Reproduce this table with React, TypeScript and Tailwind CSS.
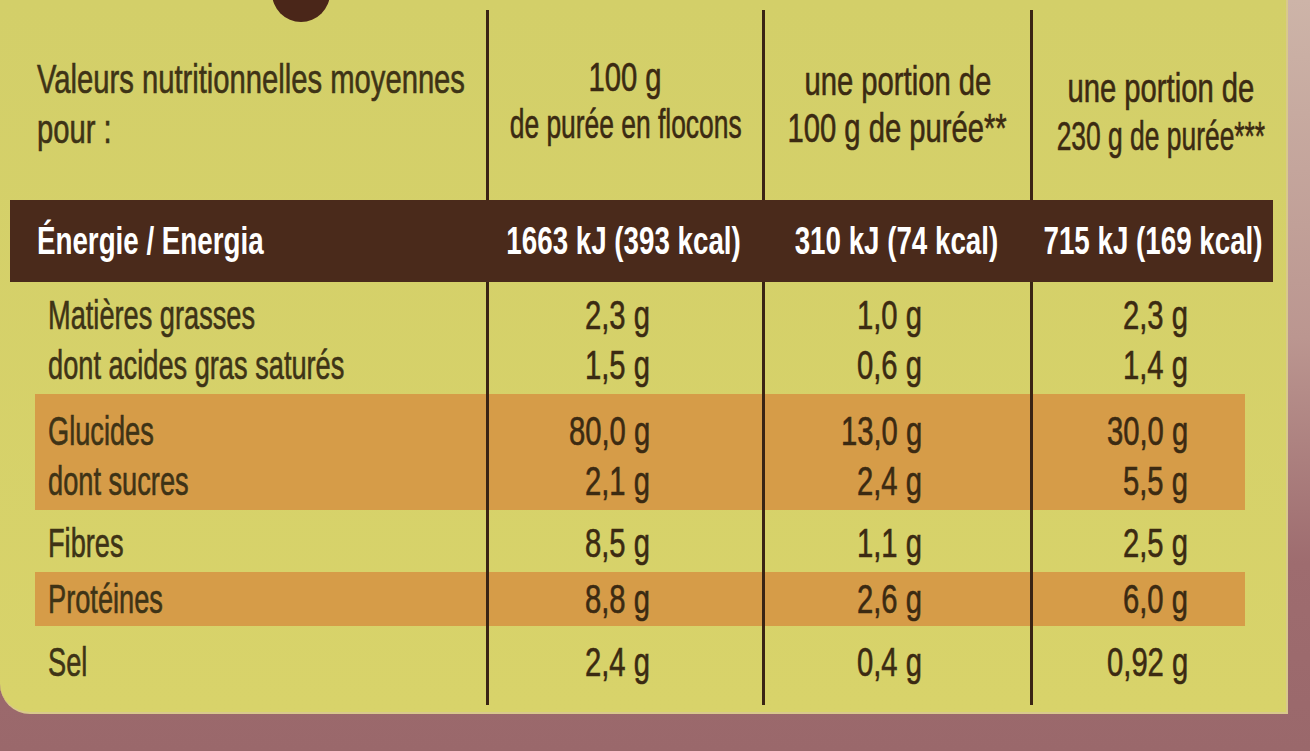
const font = "font-['Liberation_Sans','Arimo',sans-serif]"

const line = 'border-l-[3px] border-[#3a2414]'
const cols = 'grid grid-cols-[486px_276px_268px_258px]'
const band =
  'bg-[linear-gradient(to_right,transparent_35px,#d69c48_35px,#d69c48_1245px,transparent_1245px)]'
const ink = '[-webkit-text-stroke:0.6px_currentColor]'

// the print uses a condensed face; squeeze Liberation Sans to match its width
function Left({ children, label }: { children: string; label?: boolean }) {
  return (
    <div className={`whitespace-nowrap origin-left ${label ? 'scale-x-[0.68]' : 'scale-x-[0.73]'}`}>
      {children}
    </div>
  )
}

function Center({ children, tight }: { children: string; tight?: boolean }) {
  return (
    <div className="flex justify-center">
      <span
        className={`shrink-0 whitespace-nowrap origin-center ${tight ? 'scale-x-[0.66]' : 'scale-x-[0.73]'}`}
      >
        {children}
      </span>
    </div>
  )
}

function Right({ children }: { children: string }) {
  return (
    <div className="flex justify-end">
      <span className="shrink-0 whitespace-nowrap scale-x-[0.73] origin-right">{children}</span>
    </div>
  )
}

type Row = {
  labels: string[]
  values: [string[], string[], string[]]
  banded?: boolean
  h: string
}

const rows: Row[] = [
  {
    labels: ['Matières grasses', 'dont acides gras saturés'],
    values: [['2,3 g', '1,5 g'], ['1,0 g', '0,6 g'], ['2,3 g', '1,4 g']],
    h: 'h-[112px] pt-[8px]',
  },
  {
    labels: ['Glucides', 'dont sucres'],
    values: [['80,0 g', '2,1 g'], ['13,0 g', '2,4 g'], ['30,0 g', '5,5 g']],
    banded: true,
    h: 'h-[116px] pt-[12px]',
  },
  {
    labels: ['Fibres'],
    values: [['8,5 g'], ['1,1 g'], ['2,5 g']],
    h: 'h-[62px] pt-[8px]',
  },
  {
    labels: ['Protéines'],
    values: [['8,8 g'], ['2,6 g'], ['6,0 g']],
    banded: true,
    h: 'h-[54px] pt-[2px]',
  },
  {
    labels: ['Sel'],
    values: [['2,4 g'], ['0,4 g'], ['0,92 g']],
    h: 'h-[79px] pt-[11px]',
  },
]

function DataRow({ row }: { row: Row }) {
  const pads = ['pr-[112px]', 'pr-[108px]', 'pr-[100px]']
  return (
    <div className={`${cols} ${row.banded ? band : ''}`}>
      <div className={`${row.h} pl-[48px] text-[#3e3316]`}>
        {row.labels.map((l) => (
          <Left key={l} label>
            {l}
          </Left>
        ))}
      </div>
      {row.values.map((col, c) => (
        <div key={c} className={`${line} ${row.h} ${pads[c]}`}>
          {col.map((v, i) => (
            <Right key={i}>{v}</Right>
          ))}
        </div>
      ))}
    </div>
  )
}

export default function App() {
  return (
    <div className="w-[1310px] h-[751px] overflow-hidden bg-[linear-gradient(to_bottom,#cdb4a8_0%,#bb9690_45%,#9e6c6f_75%,#9a686b_100%)]">
      <div
        className={`${font} ${ink} relative w-[1288px] h-[714px] bg-[linear-gradient(to_bottom,#d3cf69,#d8d36a)] rounded-bl-[30px] border-b-2 border-r-2 border-[#d9c98c] text-[40px] leading-[50px] text-[#3b2a12] flex flex-col`}
      >
        <div className="absolute left-[272px] top-[-36px] w-[58px] h-[58px] rounded-full bg-[#4a2619]" />

        <div className="h-[10px]" />

        <div className={`${cols} h-[190px]`}>
          <div className="pl-[37px] pt-[44px] text-[#3e3316]">
            <Left>Valeurs nutritionnelles moyennes</Left>
            <Left>pour :</Left>
          </div>
          <div className={`${line} pt-[44px] leading-[47px]`}>
            <Center>100 g</Center>
            <Center tight>de purée en flocons</Center>
          </div>
          <div className={`${line} pt-[48px] leading-[47px]`}>
            <Center>une portion de</Center>
            <Center>100 g de purée**</Center>
          </div>
          <div className={`${line} pt-[54px] leading-[48px]`}>
            <Center>une portion de</Center>
            <Center tight>230 g de purée***</Center>
          </div>
        </div>

        <div className="ml-[10px] mr-[13px] h-[82px] bg-[#4a2a1b] grid grid-cols-[476px_276px_268px_245px] items-center text-[38px] font-bold text-white [-webkit-text-stroke:0px]">
          <div className="pl-[27px]">
            <Left>Énergie / Energia</Left>
          </div>
          <Center>1663 kJ (393 kcal)</Center>
          <Center>310 kJ (74 kcal)</Center>
          <Center>715 kJ (169 kcal)</Center>
        </div>

        {rows.map((r) => (
          <DataRow key={r.labels[0]} row={r} />
        ))}
      </div>
    </div>
  )
}
